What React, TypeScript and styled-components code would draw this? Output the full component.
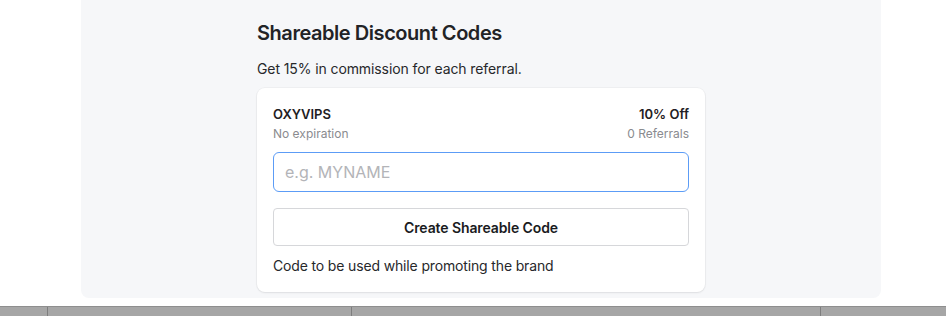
import React, { useState } from "react";
import styled, { createGlobalStyle } from "styled-components";

const GlobalStyle = createGlobalStyle`
  body {
    margin: 0;
    background: #ffffff;
    font-family: "Inter", "Liberation Sans", Arial, sans-serif;
    -webkit-font-smoothing: antialiased;
  }
`;

const Page = styled.div`
  width: 946px;
  height: 316px;
  overflow: hidden;
  display: flex;
  flex-direction: column;
`;

const Panel = styled.section`
  margin-left: 81px;
  width: 800px;
  height: 299px;
  background: #f6f7f9;
  border-radius: 0 0 8px 8px;
  box-sizing: border-box;
  padding-top: 19px;
`;

const Column = styled.div`
  width: 448px;
  margin: 0 auto;
`;

const Title = styled.h2`
  margin: 0;
  font-size: 20px;
  line-height: 28px;
  font-weight: 600;
  color: #222326;
  letter-spacing: -0.45px;
`;

const Subtitle = styled.p`
  margin: 12px 0 0;
  font-size: 14px;
  line-height: 20px;
  color: #27282b;
  letter-spacing: -0.1px;
`;

const Card = styled.div`
  margin-top: 9px;
  background: #ffffff;
  border-radius: 8px;
  padding: 16px;
  box-shadow: 0 1px 2px rgba(20, 24, 40, 0.08), 0 0 0 1px rgba(20, 24, 40, 0.03);
`;

const Row = styled.div<{ $top?: number }>`
  display: flex;
  justify-content: space-between;
  align-items: center;
  margin-top: ${(p) => p.$top ?? 0}px;
`;

const Strong = styled.span`
  font-size: 13px;
  line-height: 20px;
  font-weight: 600;
  color: #1f2023;
`;

const Muted = styled.span`
  font-size: 12px;
  line-height: 16px;
  color: #8a8b8f;
`;

const CodeInput = styled.input`
  display: block;
  width: 100%;
  box-sizing: border-box;
  height: 40px;
  margin-top: 10px;
  padding: 0 11px;
  border: 1px solid #5c9cf6;
  border-radius: 6px;
  outline: none;
  font-family: inherit;
  font-size: 16px;
  color: #1f2023;
  background: #ffffff;

  &::placeholder {
    color: #b3b4b8;
  }
`;

const CreateButton = styled.button`
  display: block;
  width: 100%;
  height: 38px;
  margin-top: 16px;
  border: 1px solid #d6d7da;
  border-radius: 4px;
  background: #ffffff;
  font-family: inherit;
  font-size: 14px;
  font-weight: 600;
  letter-spacing: -0.1px;
  color: #1a1b1e;
  cursor: pointer;
`;

const Hint = styled.p`
  margin: 10px 0 0;
  font-size: 14px;
  line-height: 20px;
  color: #27282b;
  letter-spacing: -0.15px;
`;

const Dock = styled.div`
  margin-top: 8px;
  height: 9px;
  display: flex;
  background: #a6a6a6;
  border-top: 1px solid #8e8e8e;
`;

const DockCell = styled.div<{ $w: number }>`
  width: ${(p) => p.$w}px;
  flex: none;
  border-right: 1px solid #7e7e7e;
  box-sizing: border-box;
`;

const DockRest = styled.div`
  flex: 1;
`;

export default function App() {
  const [code, setCode] = useState("");

  return (
    <Page>
      <GlobalStyle />
      <Panel>
        <Column>
          <Title>Shareable Discount Codes</Title>
          <Subtitle>Get 15% in commission for each referral.</Subtitle>
          <Card>
            <Row>
              <Strong>OXYVIPS</Strong>
              <Strong>10% Off</Strong>
            </Row>
            <Row $top={2}>
              <Muted>No expiration</Muted>
              <Muted>0 Referrals</Muted>
            </Row>
            <CodeInput
              autoFocus
              placeholder="e.g. MYNAME"
              value={code}
              onChange={(e) => setCode(e.target.value)}
            />
            <CreateButton>Create Shareable Code</CreateButton>
            <Hint>Code to be used while promoting the brand</Hint>
          </Card>
        </Column>
      </Panel>
      <Dock>
        <DockCell $w={48} />
        <DockCell $w={304} />
        <DockCell $w={469} />
        <DockRest />
      </Dock>
    </Page>
  );
}
